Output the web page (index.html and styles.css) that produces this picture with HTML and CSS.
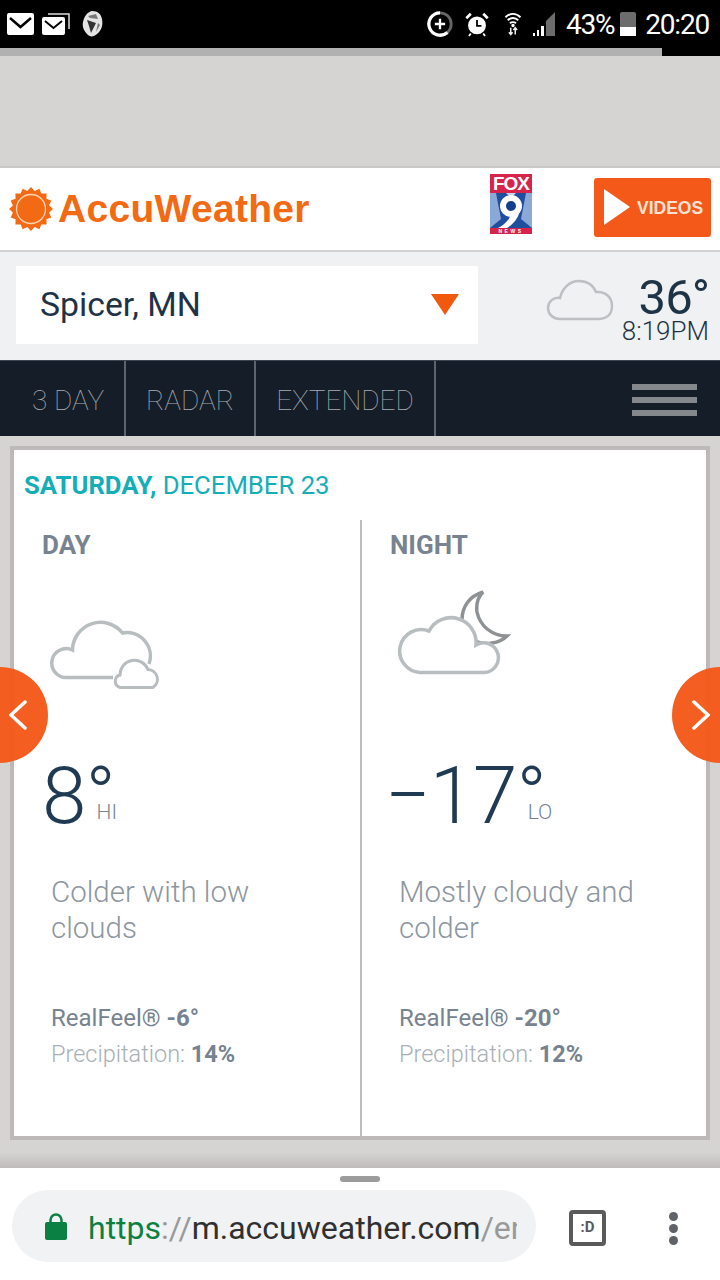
FILE: index.html
```html
<!DOCTYPE html>
<html lang="en">
<head>
  <meta charset="UTF-8">
  <meta name="viewport" content="width=device-width, initial-scale=1.0">
  <title>AccuWeather - Spicer, MN</title>
  <link rel="stylesheet" href="styles.css">
</head>
<body>
  <div class="statusbar">
    <div class="status-left">
      <svg class="ic-mail" width="27" height="22" viewBox="0 0 27 22"><rect x="0" y="0" width="27" height="22" rx="2" fill="#fff"/><path d="M3 5l10.500 9L24 5" fill="none" stroke="#000" stroke-width="2.500"/></svg>
      <svg class="ic-mail2" width="28" height="22" viewBox="0 0 28 22"><path d="M6 1h21v15" fill="none" stroke="#ddd" stroke-width="1.500"/><rect x="0" y="4" width="23" height="18" rx="2" fill="#fff"/><path d="M3 8l8.500 7L20 8" fill="none" stroke="#000" stroke-width="2"/></svg>
      <svg class="ic-helmet" width="21" height="26" viewBox="0 0 21 26"><path d="M10 0c6 0 9 3 10 8 1 6 0 11-5 15-3 3-7 3-9 1-4-4-6-8-5-13C2 6 5 1 10 0z" fill="#e4e4e4"/><path d="M5 9l9 3-5 10-2-7z" fill="#333"/><path d="M6 5l8-2 2 5-8-1zM16 12l2 2-4 7z" fill="#777"/></svg>
    </div>
    <div class="status-right">
      <svg width="28" height="28" viewBox="0 0 30 30"><path d="M15 3a12 12 0 0 1 0 24" fill="none" stroke="#666" stroke-width="3"/><path d="M23 24a12 12 0 1 1-8-21" fill="none" stroke="#fff" stroke-width="3.500"/><path d="M15 9.500v11M9.500 15h11" stroke="#fff" stroke-width="2.500"/></svg>
      <svg class="ic-alarm" width="26" height="25" viewBox="0 0 26 28"><circle cx="13" cy="15" r="10" fill="#fff"/><path d="M13 9v6.500h5" fill="none" stroke="#000" stroke-width="2"/><path d="M1 7l5-5M25 7l-5-5" stroke="#fff" stroke-width="3"/><path d="M6 24l-2 3M20 24l2 3" stroke="#fff" stroke-width="2"/></svg>
      <svg class="ic-wifi" width="22" height="24" viewBox="0 0 22 32"><path d="M1 7c6-6 14-6 20 0M4 11c4-4 10-4 14 0M7 15c2-2 6-2 8 0" fill="none" stroke="#fff" stroke-width="2.500"/><circle cx="11" cy="18" r="2.200" fill="#fff"/><path d="M8 21v9M5.500 27l2.500 3 2.500-3M14 30v-9M11.500 24l2.500-3 2.500 3" fill="none" stroke="#eee" stroke-width="2"/></svg>
      <svg class="ic-signal" width="24" height="24" viewBox="0 0 24 24"><path d="M23 0v24H14V9z" fill="#6c6c6c"/><path d="M1 24h2v-3H1zM5 24h2v-6H5zM9 24h3v-10H9z" fill="#fff"/></svg>
      <span class="battery-pct">43%</span>
      <span class="battery"><span class="battery-level"></span></span>
      <span class="clock">20:20</span>
    </div>
  </div>
  <div class="loadbar"></div>
  <div class="ad-space"></div>

  <header class="brand">
    <div class="logo">
      <svg width="44" height="44" viewBox="0 0 44 44">
        <polygon fill="#f26a13" points="22,0 25.600,3.900 30.400,1.700 32.300,6.600 37.600,6.400 37.400,11.700 42.300,13.600 40.100,18.400 44,22 40.100,25.600 42.300,30.400 37.400,32.300 37.600,37.600 32.300,37.400 30.400,42.300 25.600,40.100 22,44 18.400,40.100 13.600,42.300 11.700,37.400 6.400,37.600 6.600,32.300 1.700,30.400 3.900,25.600 0,22 3.900,18.400 1.700,13.600 6.600,11.700 6.400,6.400 11.700,6.600 13.600,1.700 18.400,3.900"/>
        <circle cx="22" cy="22" r="14.500" fill="none" stroke="#fbd3b5" stroke-width="1.300"/>
      </svg>
      <span class="logo-text">AccuWeather</span>
    </div>
    <div class="fox">
      <div class="fox-name">FOX</div>
      <svg class="fox-nine" width="42" height="35" viewBox="0 0 42 35">
        <rect width="42" height="35" fill="#1f4f9e"/>
        <path d="M0 0h6l5 26-11 9zM42 0h-6l-5 26 11 9z" fill="#8aa9d6"/>
        <path d="M16 0h10l-5 5z" fill="#c5d6ee"/>
        <circle cx="21" cy="13" r="8" fill="#123f8c" stroke="#fff" stroke-width="6"/>
        <path d="M30 14c0 9-5 16-13 21H8c8-4 12-10 13-14z" fill="#fff"/>
      </svg>
      <div class="fox-news">NEWS</div>
    </div>
    <div class="videos">
      <svg width="26" height="36" viewBox="0 0 26 36"><path d="M0 0l26 18L0 36z" fill="#fff"/></svg>
      <span>VIDEOS</span>
    </div>
  </header>

  <section class="location-row">
    <div class="location-select">
      <span>Spicer, MN</span>
      <span class="caret"></span>
    </div>
    <div class="current">
      <svg width="68" height="44" viewBox="0 0 68 44"><path d="M14 41C7 41 2 36 2 30s5-11 12-10c2-9 9-17 19-17 8 0 14 4 17 11 9-1 16 5 16 14s-6 13-14 13z" fill="none" stroke="#bcc0c3" stroke-width="2.500"/></svg>
      <div class="current-text">
        <div class="current-temp">36°</div>
        <div class="current-time">8:19PM</div>
      </div>
    </div>
  </section>

  <nav class="tabs">
    <a class="tab tab-3day">3 DAY</a>
    <a class="tab tab-radar">RADAR</a>
    <a class="tab tab-ext">EXTENDED</a>
    <div class="burger"><i></i><i></i><i></i></div>
  </nav>

  <main class="content">
    <div class="card">
      <h2 class="date"><b>SATURDAY,</b> DECEMBER 23</h2>
      <div class="columns">
        <div class="col col-day">
          <h3 class="part">DAY</h3>
          <svg class="wx-icon" width="114" height="74" viewBox="50 618 114 74">
            <path d="M113 677.500H68A14.500 14.500 0 1 1 72.500 650A28 28 0 0 1 122.500 633A23.500 23.500 0 0 1 149 664" fill="none" stroke="#b8bdc0" stroke-width="3.500"/>
            <path d="M120 687.500A6.500 6.500 0 0 1 120 675A14.500 14.500 0 0 1 148 669.500A9.800 9.800 0 0 1 153 687.500Z" fill="#fff" stroke="#b8bdc0" stroke-width="3"/>
          </svg>
          <div class="temp-line"><span class="temp">8°</span><span class="hilo">HI</span></div>
          <p class="phrase">Colder with low<br>clouds</p>
          <p class="realfeel">RealFeel® <b>-6°</b></p>
          <p class="precip">Precipitation: <b>14%</b></p>
        </div>
        <div class="col col-night">
          <h3 class="part">NIGHT</h3>
          <svg class="wx-icon" width="114" height="90" viewBox="398 588 114 90">
            <path d="M483 592C470 596 462 606 462 620C462 636 478 646 492 643C499 642 504 639 507 636C492 636 480 626 477 612C476 604 478 597 483 592Z" fill="#fff" stroke="#8f9295" stroke-width="3.500"/>
            <path d="M420 672.500A21.500 21.500 0 1 1 429 631A25 25 0 0 1 476 645A14.800 14.800 0 1 1 484 672.500Z" fill="#fff" stroke="#b8bdc0" stroke-width="3.500"/>
          </svg>
          <div class="temp-line"><span class="temp">−17°</span><span class="hilo">LO</span></div>
          <p class="phrase">Mostly cloudy and<br>colder</p>
          <p class="realfeel">RealFeel® <b>-20°</b></p>
          <p class="precip">Precipitation: <b>12%</b></p>
        </div>
      </div>
    </div>
    <div class="arrow arrow-left">
      <svg width="18" height="30" viewBox="0 0 18 30"><path d="M16 2L2 15l14 13" fill="none" stroke="#fff" stroke-width="3.500" stroke-linecap="round"/></svg>
    </div>
    <div class="arrow arrow-right">
      <svg width="18" height="30" viewBox="0 0 18 30"><path d="M2 2l14 13L2 28" fill="none" stroke="#fff" stroke-width="3.500" stroke-linecap="round"/></svg>
    </div>
  </main>

  <footer class="browser">
    <div class="handle"></div>
    <div class="browser-row">
      <div class="urlbar">
        <svg class="lock" width="22" height="28" viewBox="0 0 22 28"><path d="M5.500 12V8a5.500 5.500 0 0 1 11 0v4" fill="none" stroke="#0b8043" stroke-width="2.500"/><rect x="0" y="10" width="22" height="18" rx="2" fill="#0b8043"/></svg>
        <div class="url"><span class="url-scheme">https</span><span class="url-dim">://</span>m.accuweather.com<span class="url-dim">/en</span></div>
      </div>
      <div class="tabcount">:D</div>
      <div class="kebab"><i></i><i></i><i></i></div>
    </div>
  </footer>
</body>
</html>
```

FILE: styles.css
```css
* {
  box-sizing: border-box;
}
html, body {
  margin: 0;
  padding: 0;
}
body {
  width: 720px;
  height: 1280px;
  overflow: hidden;
  font-family: Roboto, "Noto Sans", sans-serif;
  background: #d6d3d3;
  display: flex;
  flex-direction: column;
}

/* status bar */
.statusbar {
  height: 48px;
  flex-shrink: 0;
  background: #000;
  display: flex;
  justify-content: space-between;
  align-items: center;
  padding: 0 11px 0 7px;
  color: #fff;
}
.status-left, .status-right {
  display: flex;
  align-items: center;
}
.ic-mail2 {
  margin-left: 8px;
}
.ic-helmet {
  margin-left: 12px;
}
.ic-alarm {
  margin-left: 10px;
}
.ic-wifi {
  margin-left: 12px;
}
.ic-signal {
  margin-left: 8px;
}
.battery-pct, .clock {
  font-size: 28px;
  font-weight: 400;
  letter-spacing: -1.200px;
}
.battery-pct {
  margin-left: 10px;
}
.battery {
  width: 16px;
  height: 24px;
  margin-left: 6px;
  background: #6c6c6c;
  border-radius: 2px 2px 0 0;
  display: flex;
  align-items: flex-end;
}
.battery-level {
  display: block;
  width: 100%;
  height: 9px;
  background: #fff;
}
.clock {
  margin-left: 9px;
}

.loadbar {
  height: 8px;
  flex-shrink: 0;
  background: linear-gradient(to right, #b1b1b1 662px, #000 662px);
}
.ad-space {
  height: 112px;
  flex-shrink: 0;
  border-bottom: 2px solid #c9c7c7;
}

/* logo row */
.brand {
  height: 84px;
  flex-shrink: 0;
  background: #fff;
  border-bottom: 2px solid #d2d2d2;
  display: flex;
  align-items: center;
}
.logo {
  display: flex;
  align-items: center;
  margin-left: 9px;
  width: 481px;
}
.logo-text {
  color: #f26a13;
  font-family: "Liberation Sans", Arial, sans-serif;
  font-weight: 700;
  font-size: 39px;
  letter-spacing: 0.300px;
  margin-left: 5px;
}
.fox {
  width: 42px;
  height: 60px;
  display: flex;
  flex-direction: column;
  margin-top: -10px;
}
.fox-name {
  height: 19px;
  background: #d8234a;
  color: #fff;
  font: 700 19px/19px "Liberation Sans", Arial, sans-serif;
  letter-spacing: -1px;
  text-align: center;
}
.fox-nine {
  display: block;
  flex-shrink: 0;
}
.fox-news {
  height: 6px;
  background: #d8234a;
  color: #fff;
  font: 700 5px/6px "Liberation Sans", Arial, sans-serif;
  letter-spacing: 2.500px;
  text-align: center;
}
.videos {
  width: 117px;
  height: 59px;
  margin-left: 62px;
  margin-top: -4px;
  background: #f4591a;
  border-radius: 3px;
  display: flex;
  align-items: center;
  padding-left: 10px;
  color: #f9e3d4;
  font-family: "Liberation Sans", Arial, sans-serif;
  font-weight: 700;
  font-size: 17.500px;
}
.videos span {
  margin-left: 7px;
  padding-top: 2px;
}

/* location */
.location-row {
  height: 108px;
  flex-shrink: 0;
  background: #f0f1f2;
  display: flex;
  padding: 14px 0 0 16px;
}
.location-select {
  width: 462px;
  height: 78px;
  background: #fff;
  display: flex;
  align-items: center;
  justify-content: space-between;
  padding: 0 19px 2px 24px;
  font-size: 33.800px;
  color: #1f3347;
}
.caret {
  width: 0;
  height: 0;
  border-left: 14px solid transparent;
  border-right: 14px solid transparent;
  border-top: 21px solid #f0590e;
}
.current {
  display: flex;
  margin-left: 68px;
  padding-top: 12px;
}
.current-text {
  color: #1f3347;
  text-align: right;
  width: 95px;
}
.current-temp {
  font-size: 49px;
  letter-spacing: -1px;
  line-height: 44px;
  margin-top: -2px;
}
.current-time {
  font-size: 26px;
  font-weight: 300;
  line-height: 26px;
  margin-left: -18px;
  margin-top: -2px;
  white-space: nowrap;
}

/* nav */
.tabs {
  height: 76px;
  flex-shrink: 0;
  background: #151d29;
  border-top: 1px solid #3b4450;
  display: flex;
  align-items: stretch;
}
.tab {
  display: flex;
  align-items: center;
  justify-content: center;
  padding-top: 4px;
  border-right: 2px solid #5d646e;
  color: #a8acb2;
  font-size: 28px;
  font-weight: 100;
}
.tab-3day {
  width: 126px;
  padding-left: 12px;
}
.tab-radar {
  width: 130px;
}
.tab-ext {
  width: 180px;
}
.burger {
  margin-left: auto;
  margin-right: 23px;
  padding-top: 23px;
  width: 65px;
}
.burger i {
  display: block;
  height: 6px;
  margin-bottom: 7px;
  background: #84878b;
}

/* forecast card */
.content {
  position: relative;
  flex: 1;
  padding: 10px 10px 27px;
  min-height: 0;
  background: linear-gradient(to bottom, #d6d3d3 calc(100% - 16px), #bfbbbb);
}
.card {
  height: 694px;
  border: 4px solid #bdb9b9;
  background: #fff;
  padding-top: 20px;
}
.date {
  margin: 0 0 0 10px;
  font-size: 25.700px;
  line-height: 30px;
  font-weight: 400;
  color: #14aeb8;
}
.date b {
  font-weight: 700;
}
.columns {
  display: flex;
  margin-top: 20px;
  height: 616px;
}
.col {
  width: 344px;
}
.col-day {
  width: 348px;
  border-right: 2px solid #bdbdbd;
  padding-left: 28px;
}
.col-night {
  padding-left: 28px;
}
.part {
  margin: 0;
  padding-top: 9px;
  font-size: 26px;
  line-height: 32px;
  font-weight: 700;
  color: #77838f;
}
.wx-icon {
  display: block;
  margin-left: 8px;
}
.col-day .wx-icon {
  margin-top: 57px;
  margin-bottom: 60px;
}
.col-night .wx-icon {
  margin-top: 27px;
  margin-bottom: 74px;
}
.temp-line {
  display: flex;
  align-items: flex-end;
  height: 88px;
  color: #1f3a52;
}
.temp {
  font-size: 80px;
  font-weight: 300;
  letter-spacing: -1px;
  line-height: 88px;
}
.col-night .temp {
  margin-left: -5px;
}
.hilo {
  font-size: 21px;
  font-weight: 300;
  line-height: 24px;
  color: #77838f;
  margin-left: -18px;
  margin-bottom: 16px;
}
.phrase {
  margin: 34px 0 0 9px;
  font-size: 29.500px;
  line-height: 36px;
  font-weight: 300;
  color: #8d969e;
  height: 72px;
}
.realfeel, .precip {
  margin: 0 0 0 9px;
  font-size: 24px;
  line-height: 36px;
  font-weight: 400;
  color: #77838f;
}
.realfeel {
  margin-top: 54px;
}
.precip {
  font-size: 23.500px;
  font-weight: 300;
  color: #a9b0b6;
}
.precip b, .realfeel b {
  font-weight: 700;
  color: #77838f;
}

/* side arrows */
.arrow {
  position: absolute;
  top: 231px;
  width: 96px;
  height: 96px;
  border-radius: 50%;
  background: rgba(244, 89, 26, 0.97);
  display: flex;
  align-items: center;
}
.arrow-left {
  left: -48px;
  justify-content: flex-end;
  padding-right: 21px;
}
.arrow-right {
  right: -48px;
  padding-left: 20px;
}

/* browser bar */
.browser {
  height: 112px;
  background: #fff;
  flex-shrink: 0;
}
.handle {
  width: 40px;
  height: 6px;
  border-radius: 3px;
  background: #9b9b9b;
  margin: 8px auto 0;
}
.browser-row {
  display: flex;
  align-items: center;
  margin-top: 8px;
  padding-left: 12px;
}
.urlbar {
  width: 524px;
  height: 72px;
  border-radius: 36px;
  background: #f1f2f3;
  display: flex;
  align-items: center;
  padding-left: 33px;
}
.url {
  margin-left: 21px;
  padding-top: 3px;
  width: 429px;
  overflow: hidden;
  white-space: nowrap;
  font-size: 32px;
  color: #303030;
}
.url-scheme {
  color: #0b8043;
}
.url-dim {
  color: #999;
}
.tabcount {
  width: 37px;
  height: 36px;
  margin-left: 33px;
  margin-top: 4px;
  border: 4px solid #5a5a5a;
  border-radius: 4px;
  color: #5a5a5a;
  font-size: 15px;
  font-weight: 700;
  text-align: center;
  line-height: 27px;
}
.kebab {
  margin-left: 63px;
  margin-top: 5px;
  display: flex;
  flex-direction: column;
  gap: 3px;
}
.kebab i {
  display: block;
  width: 9px;
  height: 9px;
  border-radius: 50%;
  background: #5f6368;
}
```
